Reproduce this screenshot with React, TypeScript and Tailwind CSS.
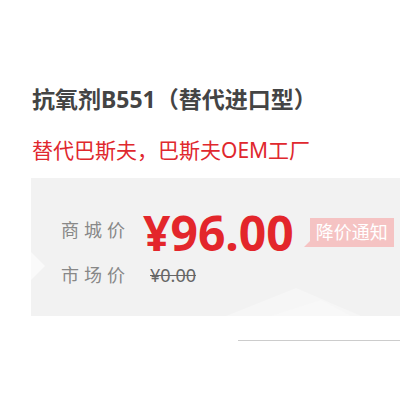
export default function App() {
  return (
    <div
      className="w-[400px] h-[400px] bg-white overflow-hidden"
      style={{ fontFamily: '"Noto Sans", "Noto Sans CJK SC", sans-serif' }}
    >
      <div className="pt-[83px] pl-[32px]">
        <h1 className="text-[23px] leading-[32px] font-bold text-[#444] whitespace-nowrap">抗氧剂B551（替代进口型）</h1>
        <p className="mt-[21px] text-[21px] leading-[28px] text-[#e0282e] whitespace-nowrap">替代巴斯夫，巴斯夫OEM工厂</p>
      </div>

      <div className="relative mt-[14px] ml-[31px] h-[138px] bg-[#f2f2f2] overflow-hidden">
        {/* faint decorative shapes */}
        <svg className="absolute inset-0" width="369" height="138" aria-hidden>
          <polygon points="0,74 14,88 0,102" fill="#fafafa" />
          <polygon points="195,138 265,110 330,138" fill="#f6f6f6" />
          <polygon points="240,138 290,122 320,138" fill="#f8f8f8" />
        </svg>

        <div className="relative pt-[23px] pl-[30px]">
          <div className="flex items-center">
            <span className="w-[82px] text-[18px] tracking-[5px] text-[#888]">商城价</span>
            <span className="mt-[6px] text-[48px] leading-[52px] font-bold text-[#e3262b]">¥96.00</span>
            <span className="relative ml-[16px] mt-[4px] h-[29px] px-[6px] bg-[#f5c3c3] text-white text-[18px] leading-[29px]">
              降价通知
              <span className="absolute left-[-6px] bottom-0 w-0 h-0 border-t-[6px] border-t-transparent border-r-[6px] border-r-[#f5c3c3]" />
            </span>
          </div>
          <div className="mt-[3px] flex items-center">
            <span className="w-[89px] text-[18px] tracking-[5px] text-[#888]">市场价</span>
            <span className="text-[18px] text-[#666] line-through">¥0.00</span>
          </div>
        </div>
      </div>

      <div className="mt-[24px] ml-[238px] h-px bg-[#ccc]" />
    </div>
  );
}
